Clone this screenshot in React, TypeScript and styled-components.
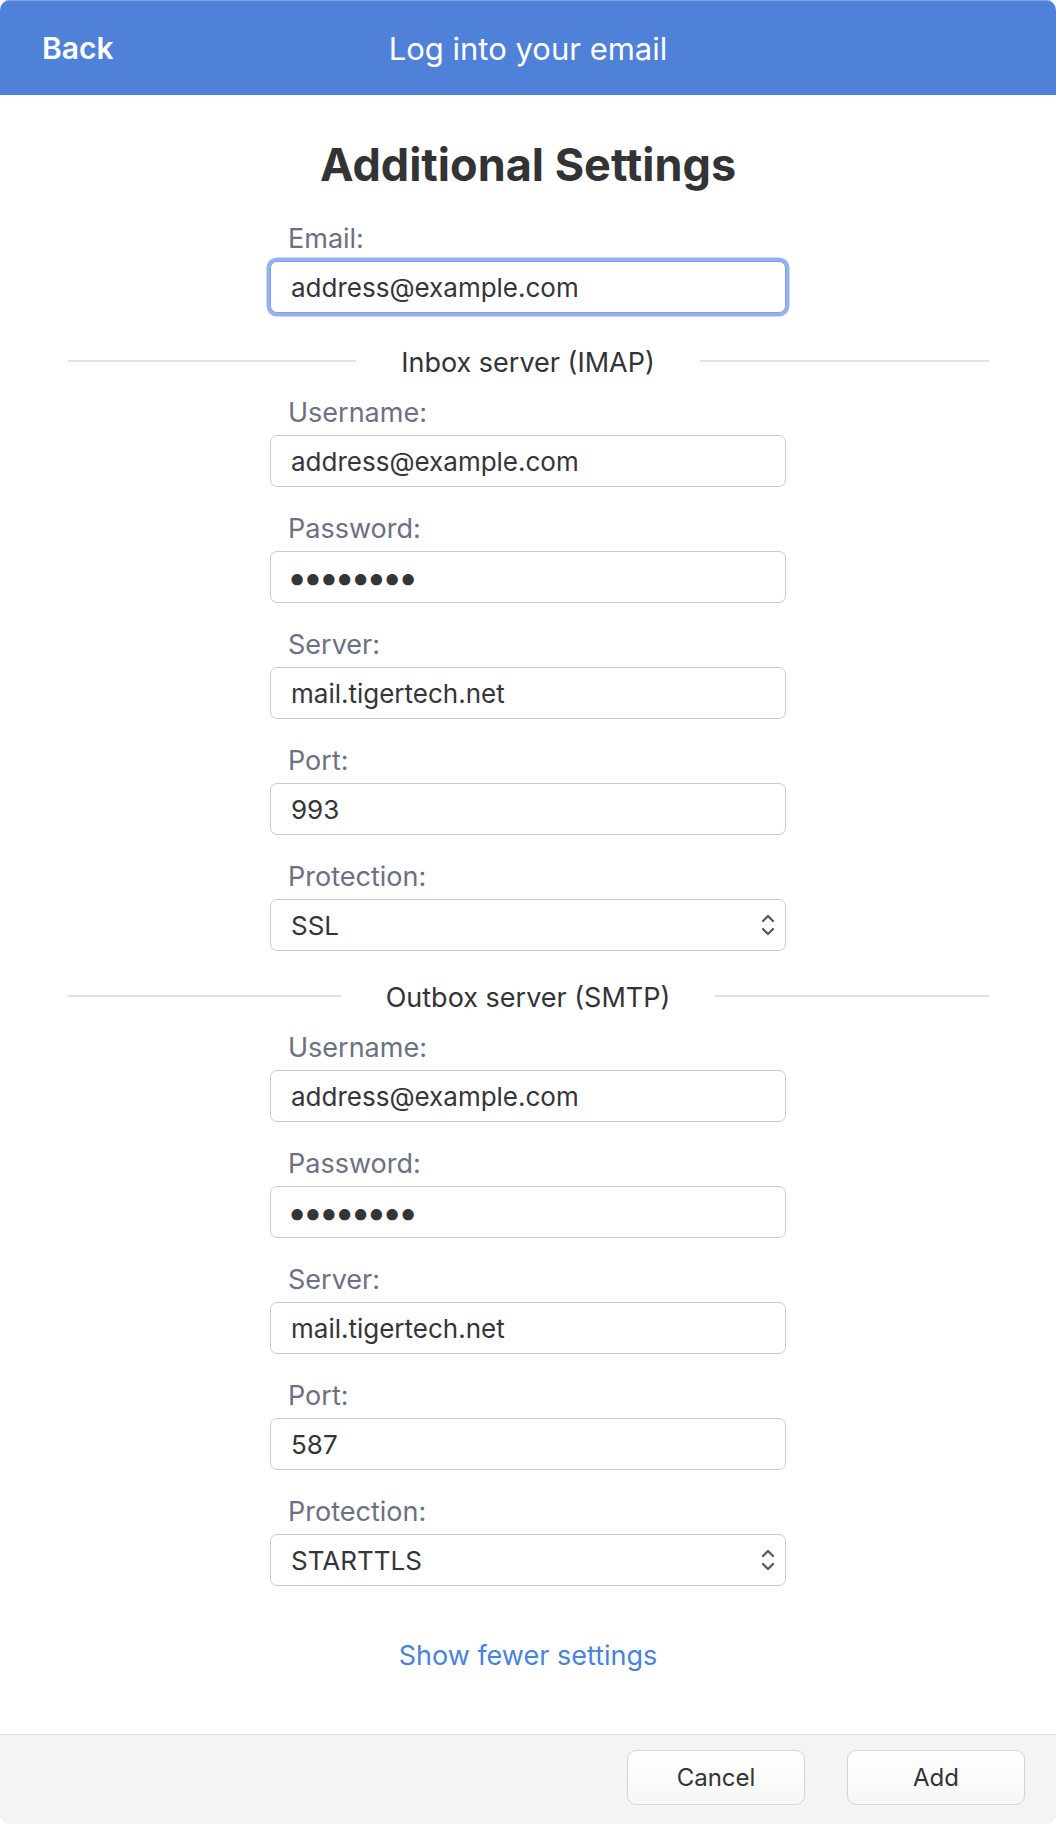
import React from 'react';
import styled, { createGlobalStyle, css } from 'styled-components';

const GlobalStyle = createGlobalStyle`
  html, body {
    margin: 0;
    padding: 0;
    background: #ffffff;
  }
  body {
    font-family: Inter, "Noto Sans", "Liberation Sans", sans-serif;
    -webkit-font-smoothing: antialiased;
  }
  * {
    box-sizing: border-box;
  }
`;

const Window = styled.div`
  display: flex;
  flex-direction: column;
  width: 1056px;
  height: 1824px;
  border-radius: 10px;
  overflow: hidden;
  background: #ffffff;
`;

const Header = styled.header`
  display: grid;
  grid-template-columns: 1fr auto 1fr;
  align-items: center;
  height: 95px;
  padding: 0 42px;
  background: #4f81d8;
  border-top: 1px solid #7fa3e4;
  color: #ffffff;
  font-size: 30px;
`;

const BackLink = styled.span`
  justify-self: start;
  font-weight: 600;
`;

const HeaderTitle = styled.span`
  font-size: 31px;
  font-weight: 400;
`;

const Content = styled.main`
  flex: 1;
  display: flex;
  flex-direction: column;
  align-items: center;
  padding-top: 45px;
`;

const Title = styled.h1`
  margin: 0 0 34px;
  font-size: 45px;
  line-height: 50px;
  font-weight: 700;
  color: #333336;
`;

const FieldBlock = styled.div<{ $last?: boolean }>`
  display: flex;
  flex-direction: column;
  width: 516px;
  margin-bottom: ${props => (props.$last ? '0' : '27px')};
`;

const Label = styled.label`
  padding-left: 18px;
  margin-bottom: 7px;
  font-size: 27px;
  line-height: 30px;
  color: #6c7083;
`;

const fieldBox = css`
  display: flex;
  align-items: center;
  width: 100%;
  height: 52px;
  padding: 0 20px;
  border: 1.5px solid #cbcbcb;
  border-radius: 7px;
  background: #ffffff;
  font-family: inherit;
  font-size: 26px;
  color: #353538;
  outline: none;
`;

const TextInput = styled.input<{ $focused?: boolean }>`
  ${fieldBox}

  ${props =>
    props.$focused &&
    css`
      border-color: #7da0e4;
      box-shadow: 0 0 0 3.5px #93b2ef;
    `}

  &[type='password'] {
    padding-left: 16px;
    font-size: 36px;
    letter-spacing: -4.4px;
  }
`;

const SelectBox = styled.div`
  ${fieldBox}
  justify-content: space-between;
  padding-right: 10px;
`;

const Divider = styled.div<{ $top: number }>`
  display: flex;
  align-items: center;
  gap: 45px;
  width: 921px;
  margin: ${props => props.$top}px 0 20px;
  font-size: 27px;
  line-height: 30px;
  color: #333336;

  &::before,
  &::after {
    content: '';
    flex: 1;
    height: 1.5px;
    margin-top: -4px;
    background: #e2e2e2;
  }
`;

const MoreLink = styled.a`
  margin-top: 55px;
  font-size: 27px;
  line-height: 30px;
  color: #4a82dc;
  text-decoration: none;
`;

const Footer = styled.footer`
  display: flex;
  justify-content: flex-end;
  align-items: flex-start;
  gap: 42px;
  height: 90px;
  padding: 15px 31px 0 0;
  background: #f4f4f4;
  border-top: 1.5px solid #e2e2e2;
`;

const Button = styled.button`
  width: 178px;
  height: 55px;
  border: 1.5px solid #d5d5d5;
  border-radius: 9px;
  background: linear-gradient(#ffffff, #f7f7f7);
  font-family: inherit;
  font-size: 24px;
  color: #333336;
`;

const Chevrons = () => (
  <svg width="14" height="26" viewBox="0 0 14 26" fill="none" stroke="#555" strokeWidth="2.2" strokeLinecap="round" strokeLinejoin="round">
    <polyline points="2,9 7,4 12,9" />
    <polyline points="2,17 7,22 12,17" />
  </svg>
);

type FieldProps = {
  label: string;
  value: string;
  password?: boolean;
  focused?: boolean;
  select?: boolean;
  last?: boolean;
};

const Field = ({ label, value, password, focused, select, last }: FieldProps) => (
  <FieldBlock $last={last}>
    <Label>{label}</Label>
    {select ? (
      <SelectBox>
        <span>{value}</span>
        <Chevrons />
      </SelectBox>
    ) : (
      <TextInput
        type={password ? 'password' : 'text'}
        defaultValue={value}
        $focused={focused}
        readOnly
      />
    )}
  </FieldBlock>
);

const servers = [
  { title: 'Inbox server (IMAP)', port: '993', protection: 'SSL', top: 35 },
  { title: 'Outbox server (SMTP)', port: '587', protection: 'STARTTLS', top: 32 },
];

export default function App() {
  return (
    <>
      <GlobalStyle />
      <Window>
        <Header>
          <BackLink>Back</BackLink>
          <HeaderTitle>Log into your email</HeaderTitle>
        </Header>
        <Content>
          <Title>Additional Settings</Title>
          <Field label="Email:" value="address@example.com" focused last />
          {servers.map(s => (
            <React.Fragment key={s.title}>
              <Divider $top={s.top}>{s.title}</Divider>
              <Field label="Username:" value="address@example.com" />
              <Field label="Password:" value="password" password />
              <Field label="Server:" value="mail.tigertech.net" />
              <Field label="Port:" value={s.port} />
              <Field label="Protection:" value={s.protection} select last />
            </React.Fragment>
          ))}
          <MoreLink href="#">Show fewer settings</MoreLink>
        </Content>
        <Footer>
          <Button>Cancel</Button>
          <Button>Add</Button>
        </Footer>
      </Window>
    </>
  );
}
